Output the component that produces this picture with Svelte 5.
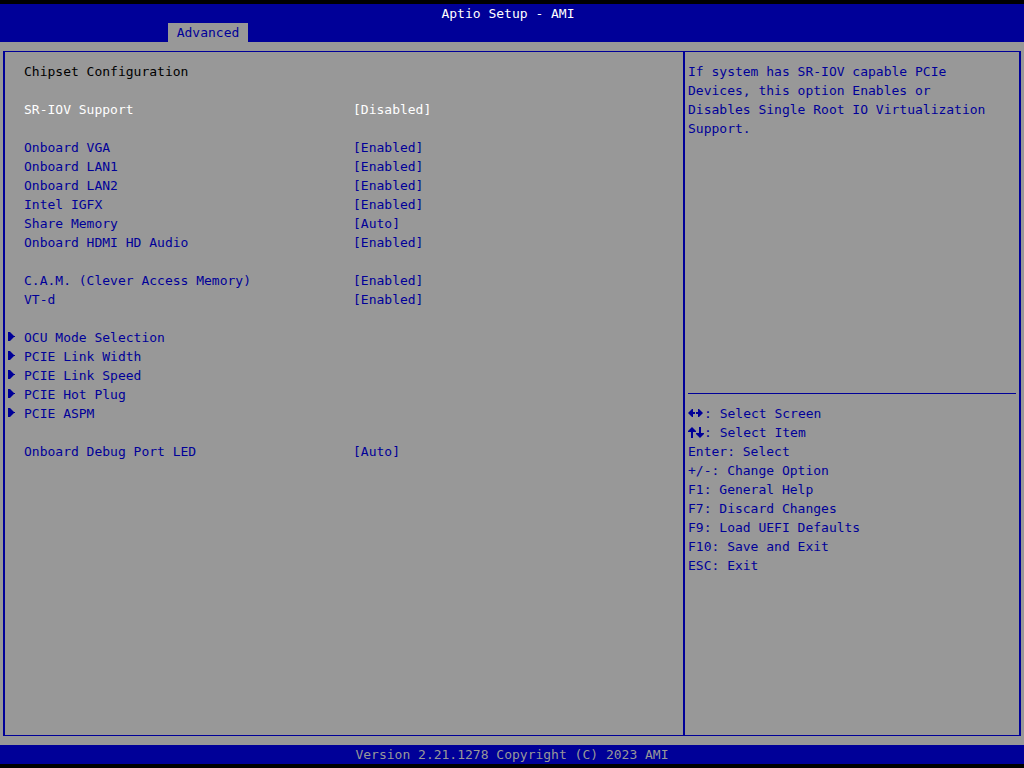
<script lang="ts">
	type Setting = {
		id: string;
		label: string;
		value: string;
		options: string[];
	};

	const toggle = ['Enabled', 'Disabled'];

	let groups = $state<Setting[][]>([
		[{ id: 'sriov', label: 'SR-IOV Support', value: 'Disabled', options: toggle }],
		[
			{ id: 'vga', label: 'Onboard VGA', value: 'Enabled', options: toggle },
			{ id: 'lan1', label: 'Onboard LAN1', value: 'Enabled', options: toggle },
			{ id: 'lan2', label: 'Onboard LAN2', value: 'Enabled', options: toggle },
			{ id: 'igfx', label: 'Intel IGFX', value: 'Enabled', options: toggle },
			{ id: 'share', label: 'Share Memory', value: 'Auto', options: ['Auto'] },
			{ id: 'hdmi', label: 'Onboard HDMI HD Audio', value: 'Enabled', options: toggle }
		],
		[
			{ id: 'cam', label: 'C.A.M. (Clever Access Memory)', value: 'Enabled', options: toggle },
			{ id: 'vtd', label: 'VT-d', value: 'Enabled', options: toggle }
		]
	]);

	let debugGroup = $state<Setting[]>([
		{ id: 'led', label: 'Onboard Debug Port LED', value: 'Auto', options: ['Auto'] }
	]);

	const submenus = [
		'OCU Mode Selection',
		'PCIE Link Width',
		'PCIE Link Speed',
		'PCIE Hot Plug',
		'PCIE ASPM'
	];

	const keys = [
		'Enter: Select',
		'+/-: Change Option',
		'F1: General Help',
		'F7: Discard Changes',
		'F9: Load UEFI Defaults',
		'F10: Save and Exit',
		'ESC: Exit'
	];

	let selected = $state('sriov');
</script>

{#snippet settingRows(items: Setting[])}
	<div class="group">
		{#each items as item (item.id)}
			<div class="row" class:selected={item.id === selected}>
				<label for={item.id}>{item.label}</label>
				<select id={item.id} bind:value={item.value} onfocus={() => (selected = item.id)}>
					{#each item.options as option}
						<option value={option}>[{option}]</option>
					{/each}
				</select>
			</div>
		{/each}
	</div>
{/snippet}

<div class="setup">
	<header>
		<h1>Aptio Setup - AMI</h1>
		<nav>
			<button class="tab" type="button">Advanced</button>
		</nav>
	</header>

	<div class="body">
		<div class="frame">
			<main>
				<h2>Chipset Configuration</h2>

				{#each groups as items}
					{@render settingRows(items)}
				{/each}

				<div class="group">
					{#each submenus as name}
						<button class="submenu" type="button">
							<svg width="8" height="11" viewBox="0 0 8 11" aria-hidden="true">
								<path d="M0 0h2l4 4h1v1h-1l-4 4h-2z" />
							</svg>
							{name}
						</button>
					{/each}
				</div>

				{@render settingRows(debugGroup)}
			</main>

			<aside>
				<p class="help">
					If system has SR-IOV capable PCIe Devices, this option Enables or Disables Single Root
					IO Virtualization Support.
				</p>

				<ul class="keys">
					<li>
						<svg width="16" height="14" viewBox="0 0 16 14" aria-label="Left and right">
							<path d="M0 5l4-4h1v3h2v2h-2v3h-1zM15 5l-4-4h-1v3h-2v2h2v3h1z" />
						</svg>: Select Screen
					</li>
					<li>
						<svg width="16" height="14" viewBox="0 0 16 14" aria-label="Up and down">
							<path d="M4 0l4 4v1h-3v6h-2v-6h-3v-1zM12 11l-4-4v-1h3v-6h2v6h3v1z" />
						</svg>: Select Item
					</li>
					{#each keys as key}
						<li>{key}</li>
					{/each}
				</ul>
			</aside>
		</div>
	</div>

	<footer>Version 2.21.1278 Copyright (C) 2023 AMI</footer>
</div>

<style>
	:global(body) {
		margin: 0;
		background: #000;
	}

	.setup {
		--blue: #000098;
		--grey: #989898;
		display: flex;
		flex-direction: column;
		box-sizing: border-box;
		min-height: 100vh;
		padding: 4px 0;
		background: #000;
		color: var(--blue);
		font-family: 'DejaVu Sans Mono', 'Liberation Mono', monospace;
		font-size: 13px;
		line-height: 19px;
	}

	h1,
	h2,
	p,
	ul {
		margin: 0;
		padding: 0;
		font-size: inherit;
		font-weight: normal;
	}

	button,
	select {
		margin: 0;
		padding: 0;
		border: 0;
		background: none;
		color: inherit;
		font: inherit;
		cursor: pointer;
	}

	header {
		background: var(--blue);
	}

	h1 {
		padding-right: 8px;
		color: #fff;
		text-align: center;
	}

	nav {
		display: flex;
		padding-left: 168px;
	}

	.tab {
		width: 80px;
		background: var(--grey);
	}

	.body {
		display: flex;
		flex: 1;
		padding: 9px 3px;
		background: var(--grey);
	}

	.frame {
		display: grid;
		flex: 1;
		grid-template-columns: 2fr minmax(0, 336px);
		border: solid var(--blue);
		border-width: 1px 2px;
	}

	main {
		padding: 10px 3px;
	}

	h2 {
		padding-left: 16px;
		color: #000;
	}

	.group {
		margin-top: 19px;
	}

	.row {
		display: grid;
		grid-template-columns: 329px 1fr;
		padding-left: 16px;
	}

	.row.selected {
		color: #fff;
	}

	select {
		appearance: none;
		justify-self: start;
		height: 19px;
		outline: none;
	}

	option {
		background: var(--grey);
		color: var(--blue);
	}

	.submenu {
		display: flex;
		align-items: center;
		gap: 8px;
	}

	svg {
		flex: none;
		fill: currentColor;
	}

	aside {
		display: flex;
		flex-direction: column;
		padding: 10px 3px;
		border-left: 2px solid var(--blue);
	}

	.help {
		min-height: 331px;
		padding-right: 20px;
	}

	.keys {
		padding-top: 10px;
		border-top: 1px solid var(--blue);
		list-style: none;
	}

	.keys svg {
		vertical-align: middle;
	}

	footer {
		background: var(--blue);
		color: var(--grey);
		text-align: center;
	}
</style>
